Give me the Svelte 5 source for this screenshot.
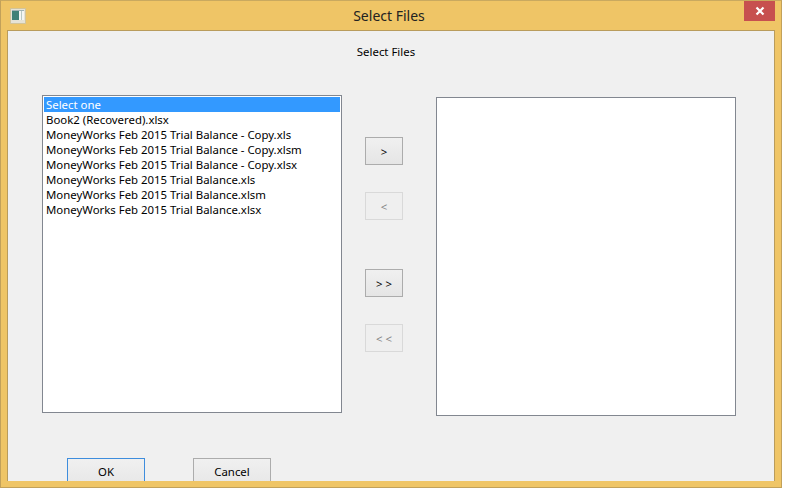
<script lang="ts">
  const files: string[] = [
    "Select one",
    "Book2 (Recovered).xlsx",
    "MoneyWorks Feb 2015 Trial Balance - Copy.xls",
    "MoneyWorks Feb 2015 Trial Balance - Copy.xlsm",
    "MoneyWorks Feb 2015 Trial Balance - Copy.xlsx",
    "MoneyWorks Feb 2015 Trial Balance.xls",
    "MoneyWorks Feb 2015 Trial Balance.xlsm",
    "MoneyWorks Feb 2015 Trial Balance.xlsx",
  ];
  let selected: number = 0;
</script>

<div class="window">
  <div class="titlebar">
    <svg class="app-icon" width="16" height="16" viewBox="0 0 16 16">
      <rect x="0.5" y="0.5" width="15" height="15" fill="#e6e3d6" stroke="#d2c49a" />
      <rect x="2" y="3" width="7" height="9" fill="#3f8178" />
      <rect x="9" y="3" width="5" height="9" fill="#f4f6f4" />
      <rect x="11" y="3" width="1" height="9" fill="#b9c9c6" />
      <rect x="2" y="2" width="12" height="1" fill="#9fb2b5" />
    </svg>
    <span class="title">Select Files</span>
    <button class="close" aria-label="Close">
      <svg width="10" height="10" viewBox="0 0 10 10">
        <path d="M1.5 1.5 L8.5 8.5 M8.5 1.5 L1.5 8.5" stroke="#fff" stroke-width="2.2" />
      </svg>
    </button>
  </div>
  <div class="client">
    <div class="heading">Select Files</div>
    <div class="main">
      <ul class="listbox">
        {#each files as file, i}
          <li class:selected={i === selected}>{file}</li>
        {/each}
      </ul>
      <div class="movers">
        <button class="btn">&gt;</button>
        <button class="btn" disabled>&lt;</button>
        <button class="btn wide-gap">&gt; &gt;</button>
        <button class="btn" disabled>&lt; &lt;</button>
      </div>
      <ul class="listbox target"></ul>
    </div>
    <div class="footer">
      <button class="btn action default">OK</button>
      <button class="btn action">Cancel</button>
    </div>
  </div>
</div>

<style>
  :global(body) {
    background: #fff;
  }

  .window {
    box-sizing: border-box;
    width: 782px;
    height: 488px;
    background: #efc566;
    border: 1px solid #c2a15a;
    border-top-color: #c9a95f;
    display: flex;
    flex-direction: column;
    padding: 0 6px 6px 6px;
    font-family: "Noto Sans", sans-serif;
    font-size: 11.4px;
    color: #000;
  }

  .titlebar {
    height: 29px;
    flex: none;
    display: flex;
    align-items: center;
    justify-content: center;
    position: relative;
  }

  .app-icon {
    position: absolute;
    left: 3px;
    top: 7px;
  }

  .title {
    font-size: 14px;
    color: #222;
    padding-right: 4px;
  }

  .close {
    position: absolute;
    right: 0;
    top: 0;
    width: 31px;
    height: 20px;
    padding: 0;
    border: none;
    background: #c7504f;
    display: flex;
    align-items: center;
    justify-content: center;
  }

  .client {
    flex: 1;
    background: #f0f0f0;
    border: 1px solid #b99c5c;
    border-bottom: none;
    overflow: hidden;
    display: flex;
    flex-direction: column;
  }

  .heading {
    text-align: center;
    margin-top: 12px;
    height: 17px;
    line-height: 17px;
    padding-right: 10px;
  }

  .main {
    display: flex;
    align-items: flex-start;
    padding: 35px 0 0 34px;
  }

  .listbox {
    box-sizing: border-box;
    width: 300px;
    height: 318px;
    margin: 0;
    padding: 1px;
    list-style: none;
    background: #fff;
    border: 1px solid #828790;
    flex: none;
  }

  .listbox.target {
    margin-top: 2px;
    margin-left: 10px;
    height: 319px;
  }

  .listbox li {
    height: 15px;
    line-height: 15px;
    padding-left: 2px;
    white-space: nowrap;
  }

  .listbox li.selected {
    background: #3399ff;
    color: #fff;
  }

  .movers {
    width: 61px;
    flex: none;
    display: flex;
    flex-direction: column;
    align-items: flex-start;
    padding: 42px 0 0 23px;
    box-sizing: content-box;
    gap: 27px;
  }

  .btn {
    box-sizing: border-box;
    width: 38px;
    height: 28px;
    padding: 0;
    border: 1px solid #acacac;
    background: linear-gradient(#f0f0f0, #e5e5e5);
    font-family: inherit;
    font-size: 11.4px;
    color: #000;
  }

  .btn:disabled {
    background: #efefef;
    border-color: #d9d9d9;
    color: #838383;
  }

  .wide-gap {
    margin-top: 22px;
  }

  .footer {
    display: flex;
    gap: 48px;
    padding: 42px 0 0 59px;
  }

  .action {
    width: 78px;
    height: 34px;
    flex: none;
    padding-bottom: 7px;
  }

  .default {
    border-color: #3e8ddd;
  }
</style>
